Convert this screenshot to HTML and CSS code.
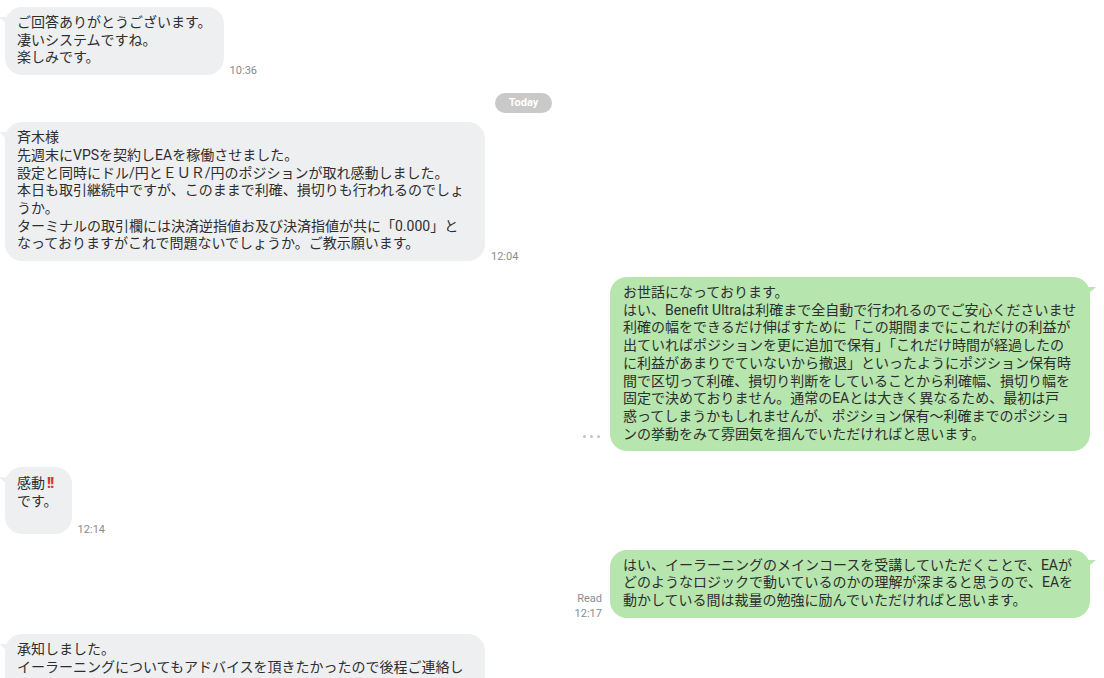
FILE: index.html
```html
<!DOCTYPE html>
<html lang="ja">
<head>
<meta charset="utf-8">
<link rel="stylesheet" href="styles.css">
</head>
<body>
<div class="chat">
  <div class="row left">
    <div class="bubble gray">ご回答ありがとうございます。<br>凄いシステムですね。<br>楽しみです。</div>
    <div class="meta">10:36</div>
  </div>

  <div class="date"><span class="pill">Today</span></div>

  <div class="row left">
    <div class="bubble gray wide">斉木様<br>先週末にVPSを契約しEAを稼働させました。<br>設定と同時にドル/円とＥＵＲ/円のポジションが取れ感動しました。<br>本日も取引継続中ですが、このままで利確、損切りも行われるのでしょ<br>うか。<br>ターミナルの取引欄には決済逆指値お及び決済指値が共に「0.000」と<br>なっておりますがこれで問題ないでしょうか。ご教示願います。</div>
    <div class="meta">12:04</div>
  </div>

  <div class="row right">
    <div class="meta dots"><span></span><span></span><span></span></div>
    <div class="bubble green wide">お世話になっております。<br>はい、Benefit Ultraは利確まで全自動で行われるのでご安心くださいませ<br>利確の幅をできるだけ伸ばすために「この期間までにこれだけの利益が<br>出ていればポジションを更に追加で保有」「これだけ時間が経過したの<br>に利益があまりでていないから撤退」といったようにポジション保有時<br>間で区切って利確、損切り判断をしていることから利確幅、損切り幅を<br>固定で決めておりません。通常のEAとは大きく異なるため、最初は戸<br>惑ってしまうかもしれませんが、ポジション保有～利確までのポジショ<br>ンの挙動をみて雰囲気を掴んでいただければと思います。</div>
  </div>

  <div class="row left">
    <div class="bubble gray tall">感動<span class="bang">!!</span><br>です。</div>
    <div class="meta">12:14</div>
  </div>

  <div class="row right">
    <div class="meta read">Read<br>12:17</div>
    <div class="bubble green wide">はい、イーラーニングのメインコースを受講していただくことで、EAが<br>どのようなロジックで動いているのかの理解が深まると思うので、EAを<br>動かしている間は裁量の勉強に励んでいただければと思います。</div>
  </div>

  <div class="row left">
    <div class="bubble gray wide">承知しました。<br>イーラーニングについてもアドバイスを頂きたかったので後程ご連絡し<br>ます。</div>
  </div>
</div>
</body>
</html>
```

FILE: styles.css
```css
html, body {
  margin: 0;
  padding: 0;
  background: #ffffff;
}

body {
  font-family: Roboto, "Noto Sans CJK JP", sans-serif;
  color: #2e2e2e;
  overflow: hidden;
  height: 678px;
}

.chat {
  display: flex;
  flex-direction: column;
  gap: 16px;
  padding: 7px 14px 0 5px;
}

.row {
  display: flex;
  align-items: flex-end;
  gap: 6px;
}

.row.right {
  justify-content: flex-end;
  gap: 8px;
}

.bubble {
  position: relative;
  font-size: 14px;
  line-height: 17.7px;
  padding: 7px 12px 8px 12px;
  border-radius: 17px;
  white-space: nowrap;
}

.bubble.wide {
  width: 480px;
  box-sizing: border-box;
}

.bubble.tall {
  padding-bottom: 23px;
  padding-top: 8px;
  padding-right: 14px;
}

.bubble.gray {
  background: #eeeff1;
}

.bubble.green {
  background: #b6e5ae;
  padding-left: 13px;
}

.bubble.gray::before {
  content: "";
  position: absolute;
  left: -6px;
  top: 10px;
  width: 9px;
  height: 8px;
  background: #eeeff1;
  clip-path: polygon(0 0, 100% 0, 100% 100%);
}

.bubble.green::before {
  content: "";
  position: absolute;
  right: -6px;
  top: 10px;
  width: 9px;
  height: 8px;
  background: #b6e5ae;
  clip-path: polygon(0 0, 100% 0, 0 100%);
}

.bang {
  color: #e0322b;
  font-weight: 900;
  letter-spacing: -0.5px;
  margin-left: 2px;
}

.meta {
  font-size: 11px;
  line-height: 14px;
  color: #8c8c8c;
  margin-bottom: -3px;
}

.meta.read {
  text-align: right;
  line-height: 15px;
  margin-bottom: -3px;
}

.meta.dots {
  display: flex;
  gap: 4px;
  margin-bottom: 13px;
  margin-right: 2px;
}

.meta.dots span {
  width: 3px;
  height: 3px;
  border-radius: 50%;
  background: #c4c4c4;
}

.date {
  display: flex;
  justify-content: center;
  padding-right: 48px;
  margin-top: 2px;
  margin-bottom: -7px;
}

.pill {
  background: #c9c9c9;
  color: #ffffff;
  font-size: 11px;
  font-weight: 700;
  line-height: 20px;
  padding: 0 14px;
  border-radius: 10px;
}
```
